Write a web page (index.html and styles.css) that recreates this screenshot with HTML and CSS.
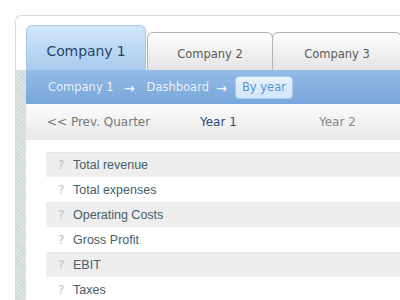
FILE: index.html
```html
<!DOCTYPE html>
<html>
<head>
<meta charset="utf-8">
<link rel="stylesheet" href="styles.css">
</head>
<body>
<div class="frame">
  <div class="tabs">
    <div class="tab active">Company 1</div>
    <div class="tab t2">Company 2</div>
    <div class="tab t3">Company 3</div>
  </div>
  <div class="body">
    <div class="strip"></div>
    <div class="main">
      <div class="crumbs">
        <span class="crumb">Company 1</span>
        <span class="arrow a1">→</span>
        <span class="crumb">Dashboard</span>
        <span class="arrow a2">→</span>
        <span class="pill">By year</span>
      </div>
      <div class="subnav">
        <span class="prev">&lt;&lt; Prev. Quarter</span>
        <span class="year cur">Year 1</span>
        <span class="year">Year 2</span>
      </div>
      <div class="rows">
        <div class="row odd"><span class="q">?</span><span class="label">Total revenue</span></div>
        <div class="row"><span class="q">?</span><span class="label">Total expenses</span></div>
        <div class="row odd"><span class="q">?</span><span class="label">Operating Costs</span></div>
        <div class="row"><span class="q">?</span><span class="label">Gross Profit</span></div>
        <div class="row odd"><span class="q">?</span><span class="label">EBIT</span></div>
        <div class="row"><span class="q">?</span><span class="label">Taxes</span></div>
      </div>
    </div>
  </div>
</div>
</body>
</html>
```
FILE: styles.css
```css
html, body {
  margin: 0;
  padding: 0;
  width: 400px;
  height: 300px;
  overflow: hidden;
}
body {
  background-color: #fff;
  background-image: radial-gradient(circle, #efefef 0.5px, transparent 0.8px);
  background-size: 4px 4px;
  font-family: "DejaVu Sans", sans-serif;
}
.frame {
  margin: 15px 0 0 15px;
  border-top: 1px solid #dadada;
  border-left: 1px solid #dadada;
  border-top-left-radius: 6px;
  background: #fff;
  height: 290px;
  overflow: hidden;
}
.tabs {
  display: flex;
  align-items: flex-end;
  padding: 9px 0 0 10px;
  height: 45px;
}
.tab {
  box-sizing: border-box;
  border-radius: 6px 6px 0 0;
  display: flex;
  align-items: center;
  justify-content: center;
  flex: none;
}
.tab.active {
  width: 120px;
  height: 45px;
  border: 1px solid #a9c7e8;
  border-bottom: none;
  background: linear-gradient(#d3e7fb, #a7caed);
  color: #27446a;
  font-size: 14px;
  letter-spacing: -0.1px;
  padding: 5px 0 0 0;
}
.tab.t2, .tab.t3 {
  height: 38px;
  border: 1px solid #b3b3b3;
  border-bottom: none;
  background: linear-gradient(#fefefe, #e4e4e4);
  color: #5a5a5a;
  font-size: 11.5px;
  padding-top: 4px;
}
.tab.t2 {
  width: 126px;
  margin-left: 1px;
}
.tab.t3 {
  width: 130px;
  margin-left: -1px;
}
.body {
  display: flex;
  height: 240px;
}
.strip {
  width: 10px;
  flex: none;
  background: repeating-linear-gradient(45deg, #d0d8d8 0 1px, #dde3e3 1px 3px);
}
.main {
  flex: 1;
  background: #fff;
}
.crumbs {
  height: 34px;
  background: linear-gradient(#93bce6, #78a7da);
  display: flex;
  align-items: center;
  padding-left: 22px;
  font-size: 11.5px;
  color: #f0f6fd;
}
.crumb {
  text-shadow: 0 0 1px rgba(60, 100, 160, 0.3);
}
.arrow {
  font-size: 13px;
  color: #fff;
  position: relative;
  top: 1px;
}
.a1 {
  margin: 0 12px 0 10px;
}
.a2 {
  margin: 0 8px 0 7px;
}
.pill {
  padding: 2px 6px;
  border: 1px solid #a9cbec;
  border-radius: 4px;
  background: linear-gradient(#e8f2fc, #d3e6f8);
  color: #5a93d2;
  font-size: 11.5px;
  height: 17px;
  line-height: 17px;
}
.subnav {
  height: 36px;
  background: linear-gradient(#fbfbfb, #e9e9e9);
  display: flex;
  align-items: center;
  font-size: 12px;
  color: #777;
  padding-left: 21px;
}
.prev {
  width: 153px;
}
.year {
  width: 119px;
  color: #888;
}
.year.cur {
  color: #2a4c78;
}
.rows {
  margin: 12px 0 0 20px;
  font-family: "Liberation Sans", Arial, sans-serif;
  font-size: 12.5px;
}
.row {
  height: 25px;
  display: flex;
  align-items: center;
  color: #45606a;
}
.row.odd {
  background: #eeeeee;
  border-top: 1px solid #e6e6e6;
  box-sizing: border-box;
}
.q {
  width: 27px;
  padding-left: 12px;
  box-sizing: border-box;
  color: #c0c0c0;
  font-size: 12px;
  font-family: "DejaVu Sans", sans-serif;
}
```
